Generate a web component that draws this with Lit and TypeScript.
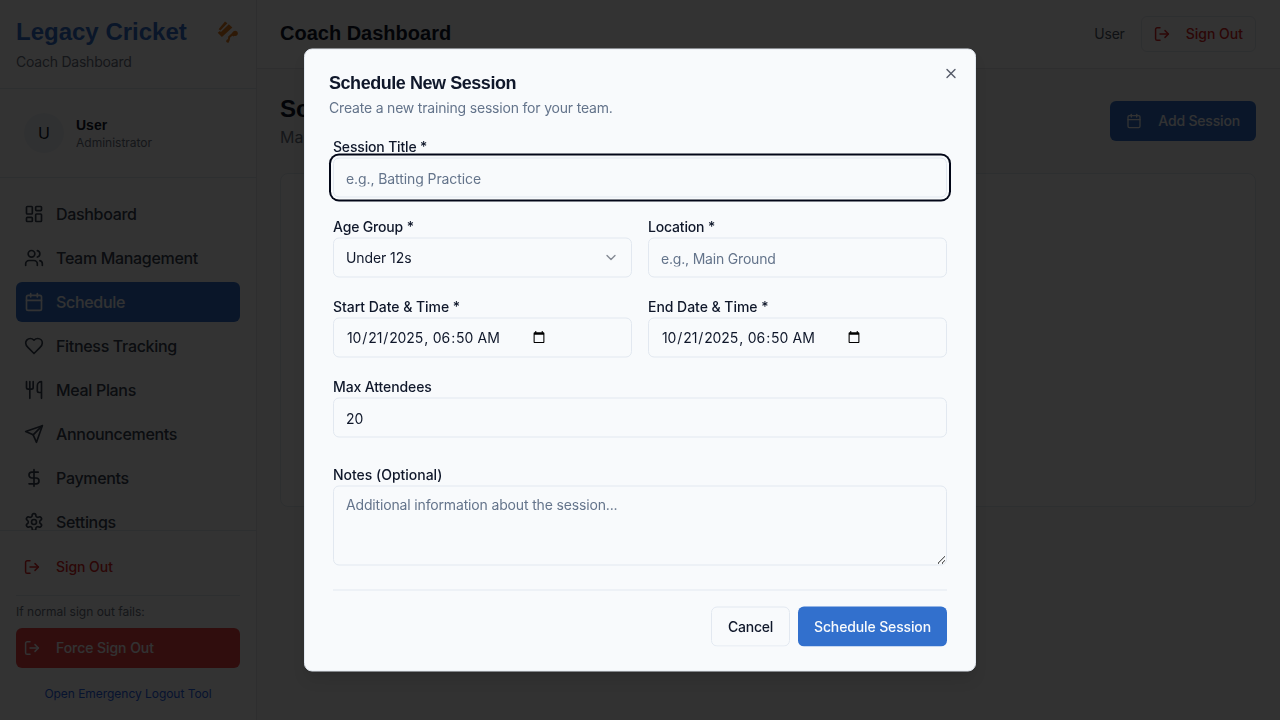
import { LitElement, html, css, svg } from "lit";
import { customElement } from "lit/decorators.js";

const ICONS: Record<string, unknown> = {
  dashboard: svg`<rect width="7" height="9" x="3" y="3" rx="1"/><rect width="7" height="5" x="14" y="3" rx="1"/><rect width="7" height="9" x="14" y="12" rx="1"/><rect width="7" height="5" x="3" y="16" rx="1"/>`,
  users: svg`<path d="M16 21v-2a4 4 0 0 0-4-4H6a4 4 0 0 0-4 4v2"/><circle cx="9" cy="7" r="4"/><path d="M22 21v-2a4 4 0 0 0-3-3.87"/><path d="M16 3.13a4 4 0 0 1 0 7.75"/>`,
  calendar: svg`<path d="M8 2v4"/><path d="M16 2v4"/><rect width="18" height="18" x="3" y="4" rx="2"/><path d="M3 10h18"/>`,
  heart: svg`<path d="M19 14c1.49-1.46 3-3.21 3-5.5A5.5 5.5 0 0 0 16.5 3c-1.76 0-3 .5-4.5 2-1.5-1.5-2.74-2-4.5-2A5.5 5.5 0 0 0 2 8.5c0 2.3 1.5 4.05 3 5.5l7 7Z"/>`,
  utensils: svg`<path d="M3 2v7c0 1.1.9 2 2 2h4a2 2 0 0 0 2-2V2"/><path d="M7 2v20"/><path d="M21 15V2a5 5 0 0 0-5 5v6c0 1.1.9 2 2 2h3Zm0 0v7"/>`,
  send: svg`<path d="m22 2-7 20-4-9-9-4Z"/><path d="M22 2 11 13"/>`,
  dollar: svg`<line x1="12" x2="12" y1="2" y2="22"/><path d="M17 5H9.5a3.5 3.5 0 0 0 0 7h5a3.5 3.5 0 0 1 0 7H6"/>`,
  settings: svg`<path d="M12.22 2h-.44a2 2 0 0 0-2 2v.18a2 2 0 0 1-1 1.73l-.43.25a2 2 0 0 1-2 0l-.15-.08a2 2 0 0 0-2.73.73l-.22.38a2 2 0 0 0 .73 2.73l.15.1a2 2 0 0 1 1 1.72v.51a2 2 0 0 1-1 1.74l-.15.09a2 2 0 0 0-.73 2.73l.22.38a2 2 0 0 0 2.73.73l.15-.08a2 2 0 0 1 2 0l.43.25a2 2 0 0 1 1 1.73V20a2 2 0 0 0 2 2h.44a2 2 0 0 0 2-2v-.18a2 2 0 0 1 1-1.73l.43-.25a2 2 0 0 1 2 0l.15.08a2 2 0 0 0 2.73-.73l.22-.39a2 2 0 0 0-.73-2.73l-.15-.08a2 2 0 0 1-1-1.74v-.5a2 2 0 0 1 1-1.74l.15-.09a2 2 0 0 0 .73-2.73l-.22-.38a2 2 0 0 0-2.73-.73l-.15.08a2 2 0 0 1-2 0l-.43-.25a2 2 0 0 1-1-1.73V4a2 2 0 0 0-2-2z"/><circle cx="12" cy="12" r="3"/>`,
  close: svg`<path d="M18 6 6 18"/><path d="m6 6 12 12"/>`,
  chevron: svg`<path d="m6 9 6 6 6-6"/>`,
};

const icon = (name: string, size: number, cls = "") =>
  html`<svg class="icon ${cls}" width=${size} height=${size} viewBox="0 0 24 24">${ICONS[name]}</svg>`;

const signOutIcon = html`<svg class="icon exit" width="16" height="16" viewBox="0 0 16 16"><path d="M6 1.7H3.2A1.6 1.6 0 0 0 1.6 3.3v9.4a1.6 1.6 0 0 0 1.6 1.6H6"/><path d="M6 8h8.3"/><path d="m11 4.6 3.4 3.4-3.4 3.4"/></svg>`;

const NAV: [string, string][] = [
  ["dashboard", "Dashboard"],
  ["users", "Team Management"],
  ["calendar", "Schedule"],
  ["heart", "Fitness Tracking"],
  ["utensils", "Meal Plans"],
  ["send", "Announcements"],
  ["dollar", "Payments"],
  ["settings", "Settings"],
];

@customElement("app-root")
export class AppRoot extends LitElement {
  static styles = css`
    :host { display: block; width: 100vw; height: 100vh; overflow: hidden; position: relative;
      font-family: Inter, "Liberation Sans", sans-serif; color: #0f172a; font-size: 16px; line-height: 24px; }
    *, *::before { box-sizing: border-box; }
    h1, h2, h3, p { margin: 0; }
    button, input, textarea { font: inherit; color: inherit; margin: 0; }
    .icon { display: block; flex: none; fill: none; stroke: currentColor; stroke-width: 2; stroke-linecap: round; stroke-linejoin: round; }
    .exit { stroke-width: 1.5; }
    .head-font { font-family: "Liberation Sans", sans-serif; font-weight: 700; }

    .page { display: flex; height: 100%; background: #f9fafb; }
    .sidebar { width: 257px; flex: none; display: flex; flex-direction: column; background: #fff; border-right: 1px solid #e5e7eb; }
    .brand { height: 89px; padding: 16px; border-bottom: 1px solid #e2e8f0; flex: none; }
    .brand-row { display: flex; justify-content: space-between; align-items: center; height: 32px; }
    .brand-name { font-size: 24px; line-height: 32px; color: #3270cd; }
    .brand-sub { margin-top: 4px; font-size: 14px; line-height: 20px; color: #6b7280; letter-spacing: -.23px; }
    .profile { height: 89px; flex: none; display: flex; align-items: center; gap: 12px; padding: 0 24px; border-bottom: 1px solid #e2e8f0; }
    .avatar { width: 40px; height: 40px; border-radius: 50%; background: #f1f5f9; display: flex; align-items: center; justify-content: center; }
    .profile-name { font-size: 14px; line-height: 20px; }
    .profile-role { font-size: 12px; line-height: 16px; color: #6b7280; }
    .nav { flex: 1; min-height: 0; overflow: hidden; padding: 16px; display: flex; flex-direction: column; gap: 4px; }
    .nav-item { height: 40px; flex: none; display: flex; align-items: center; gap: 12px; padding: 0 8px; border-radius: 6px; font-weight: 500; color: #374151; letter-spacing: -.32px; }
    .nav-item.active { background: #3270cd; color: #f8fafc; }
    .side-foot { height: 190px; flex: none; border-top: 1px solid #e2e8f0; padding: 16px; display: flex; flex-direction: column; font-size: 14px; }
    .out { height: 40px; display: flex; align-items: center; gap: 16px; padding: 0 8px; color: #dc2626; font-weight: 500; border-radius: 6px; letter-spacing: -.06px; }
    .fallback { margin-top: 8px; border-top: 1px solid #e2e8f0; padding-top: 8px; }
    .hint { font-size: 12px; line-height: 16px; color: #6b7280; margin-bottom: 8px; }
    .force { background: #ef4444; color: #f8fafc; }
    .tool { margin-top: 18px; text-align: center; font-size: 12px; line-height: 16px; color: #2563eb; letter-spacing: -.04px; }

    .main { flex: 1; min-width: 0; display: flex; flex-direction: column; }
    .topbar { height: 69px; flex: none; display: flex; align-items: center; justify-content: space-between; padding: 0 24px 0 23px; background: #fff; border-bottom: 1px solid #e5e7eb; }
    .topbar-title { font-size: 20px; line-height: 28px; padding-bottom: 2px; }
    .topbar-right { display: flex; align-items: center; gap: 16px; font-size: 14px; color: #4b5563; letter-spacing: -.2px; }
    .out-btn { height: 36px; display: flex; align-items: center; gap: 16px; padding: 0 12px; border: 1px solid #e2e8f0; border-radius: 6px; color: #dc2626; font-weight: 500; letter-spacing: 0; }
    .content { flex: 1; padding: 24px 24px 0 23px; }
    .content-head { display: flex; justify-content: space-between; align-items: center; height: 56px; }
    .content-title { font-size: 24px; line-height: 32px; }
    .content-sub { color: #6b7280; }
    .add { height: 40px; display: flex; align-items: center; gap: 16px; padding: 0 16px; border-radius: 6px; background: #3270cd; color: #f8fafc; font-size: 14px; font-weight: 500; letter-spacing: -.17px; }
    .panel { margin-top: 24px; height: 334px; background: #fff; border: 1px solid #e2e8f0; border-radius: 8px; }

    .overlay { position: absolute; inset: 0; background: rgba(0, 0, 0, .8); }
    .dialog { position: absolute; left: 50%; top: 50%; transform: translate(-50%, -50%); will-change: transform; width: 672px; height: 623px; background: #f8fafc; border: 1px solid #e2e8f0; border-radius: 8px; padding: 24px;
      box-shadow: 0 10px 15px -3px rgba(0,0,0,.1), 0 4px 6px -4px rgba(0,0,0,.1); }
    .close { position: absolute; right: 16px; top: 16px; opacity: .7; }
    .dialog-title { font-size: 18px; line-height: 18px; letter-spacing: -.45px; }
    .dialog-sub { margin-top: 6px; font-size: 14px; line-height: 20px; color: #64748b; letter-spacing: -.19px; }
    .form { padding: 20px 4px 0; font-size: 14px; }
    .field { display: flex; flex-direction: column; height: 80px; }
    .label { height: 20px; line-height: 18px; font-weight: 500; letter-spacing: -.11px; }
    .label.tight { letter-spacing: -.17px; }
    .label.loose { letter-spacing: -.02px; }
    .label.date { letter-spacing: -.04px; }
    .two { display: grid; grid-template-columns: 1fr 1fr; gap: 16px; }
    .control { height: 40px; width: 100%; flex: none; border: 1px solid #e2e8f0; border-radius: 6px; background: #f8fafc; padding: 0 12px; display: flex; align-items: center; font-size: 14px; line-height: 20px; outline: none; letter-spacing: -.09px; }
    .control::placeholder { color: #64748b; opacity: 1; }
    .place { letter-spacing: -.19px; }
    .when { letter-spacing: -.12px; }
    .focused { box-shadow: 0 0 0 2px #f8fafc, 0 0 0 4px #020617; }
    .select { justify-content: space-between; }
    .chev { opacity: .5; }
    .area { display: block; height: 80px; padding: 8px 12px; resize: vertical; letter-spacing: -.155px; }
    .text { padding-top: 1px; }
    .notes { height: 108px; margin-top: 8px; }
    .actions { border-top: 1px solid #e2e8f0; margin-top: 16px; padding-top: 16px; display: flex; justify-content: flex-end; gap: 8px; }
    .btn { height: 40px; display: flex; align-items: center; padding: 0 16px; border: 1px solid #e2e8f0; border-radius: 6px; background: #f8fafc; font-weight: 500; letter-spacing: -.25px; }
    .btn.primary { background: #3270cd; border: 0; color: #f8fafc; letter-spacing: -.13px; }
  `;

  render() {
    return html`
      <div class="page">
        <aside class="sidebar">
          <div class="brand">
            <div class="brand-row">
              <h1 class="brand-name head-font">Legacy Cricket</h1>
              <svg width="24" height="24" viewBox="0 0 24 24" fill="#e67e22"><path d="M2.6 9.2 9 1.4l2.4 1.9-7 7.1z"/><path d="m1.7 12.8 2.2-1.7 1 1 7.9-7.9 3.6 3.2L5.9 17z"/><circle cx="19.2" cy="13.3" r="2.6"/><path d="m17 12 2.4 3.2-2 1.2-1-.6-2.2 1.8-.7 3.2-1.2 2.2-2.1-.9.2-2.1 1.6-1 .2-2.6 3.4-2.8z"/></svg>
            </div>
            <p class="brand-sub">Coach Dashboard</p>
          </div>
          <div class="profile">
            <div class="avatar">U</div>
            <div><p class="profile-name head-font">User</p><p class="profile-role">Administrator</p></div>
          </div>
          <nav class="nav">
            ${NAV.map(([i, t]) => html`<div class="nav-item ${t === "Schedule" ? "active" : ""}">${icon(i, 20)}<span>${t}</span></div>`)}
          </nav>
          <div class="side-foot">
            <div class="out">${signOutIcon}<span>Sign Out</span></div>
            <div class="fallback">
              <p class="hint">If normal sign out fails:</p>
              <div class="out force">${signOutIcon}<span>Force Sign Out</span></div>
              <p class="tool">Open Emergency Logout Tool</p>
            </div>
          </div>
        </aside>
        <div class="main">
          <header class="topbar">
            <h2 class="topbar-title head-font">Coach Dashboard</h2>
            <div class="topbar-right"><span>User</span><div class="out-btn">${signOutIcon}<span>Sign Out</span></div></div>
          </header>
          <main class="content">
            <div class="content-head">
              <div><h2 class="content-title head-font">Schedule</h2><p class="content-sub">Manage training sessions</p></div>
              <div class="add">${icon("calendar", 16)}<span>Add Session</span></div>
            </div>
            <div class="panel"></div>
          </main>
        </div>
      </div>
      <div class="overlay">
        <section class="dialog">
          <div class="close">${icon("close", 16)}</div>
          <h2 class="dialog-title head-font">Schedule New Session</h2>
          <p class="dialog-sub">Create a new training session for your team.</p>
          <div class="form">
            <div class="field"><label class="label tight">Session Title *</label><input class="control text focused" placeholder="e.g., Batting Practice"></div>
            <div class="two">
              <div class="field"><label class="label tight">Age Group *</label><div class="control select"><span>Under 12s</span>${icon("chevron", 16, "chev")}</div></div>
              <div class="field"><label class="label tight">Location *</label><input class="control text place" placeholder="e.g., Main Ground"></div>
            </div>
            <div class="two">
              <div class="field"><label class="label date">Start Date &amp; Time *</label><input class="control when" type="datetime-local" value="2025-10-21T06:50"></div>
              <div class="field"><label class="label date">End Date &amp; Time *</label><input class="control when" type="datetime-local" value="2025-10-21T06:50"></div>
            </div>
            <div class="field"><label class="label">Max Attendees</label><input class="control text" value="20"></div>
            <div class="field notes"><label class="label loose">Notes (Optional)</label><textarea class="control area" placeholder="Additional information about the session..."></textarea></div>
            <div class="actions"><div class="btn">Cancel</div><div class="btn primary">Schedule Session</div></div>
          </div>
        </section>
      </div>`;
  }
}
